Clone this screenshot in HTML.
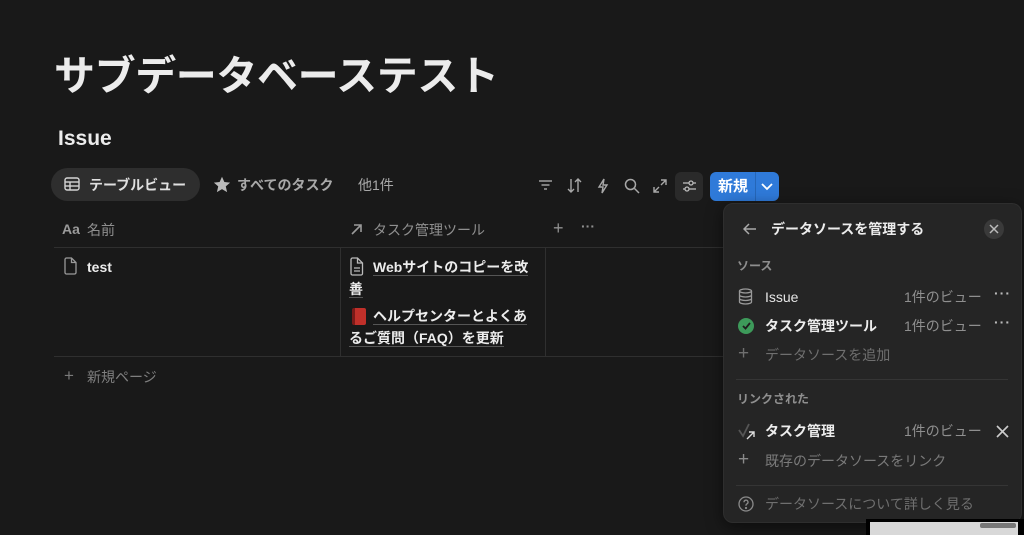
<!DOCTYPE html>
<html><head><meta charset="utf-8"><style>
*{margin:0;padding:0;box-sizing:border-box}
body{width:1024px;height:535px;background:#191919;color:#d4d4d4;font-family:"Liberation Sans","Noto Sans CJK JP",sans-serif;position:relative;overflow:hidden;font-size:14px}
.a{position:absolute;white-space:nowrap}
.t{color:#ececec;font-weight:700}
.g{color:#8f8f8f}
.ul{border-bottom:1px solid #555}
svg{position:absolute}
</style></head><body>
<div class="a t" style="left:54px;top:50px;font-size:41px;line-height:52px;letter-spacing:-0.4px">サブデータベーステスト</div>
<div class="a t" style="left:58px;top:125px;font-size:21px;line-height:28px">Issue</div>

<div class="a" style="left:51px;top:168px;width:149px;height:33px;border-radius:17px;background:#2e2e2e"></div>
<svg style="left:64px;top:177px" width="16" height="15" viewBox="0 0 16 15" fill="none" stroke="#d4d4d4" stroke-width="1.4"><rect x="1" y="1" width="14" height="12" rx="2"/><line x1="1" y1="5" x2="15" y2="5"/><line x1="1" y1="9" x2="15" y2="9"/><line x1="6" y1="5" x2="6" y2="13"/></svg>
<div class="a t" style="left:89px;top:176px;font-size:14px;line-height:18px;color:#e0e0e0">テーブルビュー</div>
<svg style="left:213px;top:176px" width="18" height="17" viewBox="0 0 24 23"><path d="M12 1l3.2 7.2 7.8.7-5.9 5.2 1.8 7.7L12 17.8 5.1 21.8l1.8-7.7L1 8.9l7.8-.7z" fill="#bbb"/></svg>
<div class="a" style="left:237px;top:176px;font-size:14px;line-height:18px;color:#a8a8a8;font-weight:700">すべてのタスク</div>
<div class="a" style="left:358px;top:176px;font-size:14px;line-height:18px;color:#a8a8a8">他1件</div>

<svg style="left:538px;top:179px" width="15" height="12" stroke="#a8a8a8" stroke-width="1.4"><line x1="1" y1="2" x2="14" y2="2"/><line x1="3.5" y1="6" x2="11.5" y2="6"/><line x1="6" y1="10" x2="9" y2="10"/></svg>
<svg style="left:567px;top:178px" width="15" height="15" fill="none" stroke="#a8a8a8" stroke-width="1.4"><path d="M4 1v13M1 11l3 3 3-3M11 14V1M8 4l3-3 3 3"/></svg>
<svg style="left:597px;top:178px" width="12" height="16" fill="none" stroke="#a8a8a8" stroke-width="1.4"><path d="M7 1L2 9h4l-1 6 5-8H6z"/></svg>
<svg style="left:624px;top:178px" width="16" height="16" fill="none" stroke="#a8a8a8" stroke-width="1.5"><circle cx="6.5" cy="6.5" r="5"/><line x1="10.5" y1="10.5" x2="15" y2="15"/></svg>
<svg style="left:653px;top:179px" width="14" height="14" fill="none" stroke="#a8a8a8" stroke-width="1.4"><path d="M8 1h5v5M13 1L8 6M6 13H1V8M1 13l5-5"/></svg>
<div class="a" style="left:675px;top:172px;width:28px;height:29px;border-radius:6px;background:#2a2a2a"></div>
<svg style="left:682px;top:179px" width="15" height="14" fill="none" stroke="#bbb" stroke-width="1.3"><line x1="1" y1="4" x2="14" y2="4"/><line x1="1" y1="10" x2="14" y2="10"/><circle cx="9" cy="4" r="2" fill="#2a2a2a"/><circle cx="5" cy="10" r="2" fill="#2a2a2a"/></svg>
<div class="a" style="left:710px;top:172px;width:69px;height:29px;border-radius:6px;background:#2f7ad9"></div>
<div class="a" style="left:755px;top:172px;width:1px;height:29px;background:#2566b8"></div>
<div class="a" style="left:718px;top:177px;font-size:15px;line-height:19px;color:#fff;font-weight:700">新規</div>
<svg style="left:761px;top:183px" width="12" height="8" fill="none" stroke="#fff" stroke-width="1.8"><path d="M1 1l5 5 5-5"/></svg>

<div class="a" style="left:62px;top:221px;font-size:14px;color:#9a9a9a;font-weight:700">Aa</div>
<div class="a g" style="left:87px;top:221px;font-size:14px;line-height:18px">名前</div>
<svg style="left:350px;top:223px" width="12" height="12" fill="none" stroke="#9a9a9a" stroke-width="1.6"><path d="M2 11L11 2M4 2h7v7"/></svg>
<div class="a g" style="left:373px;top:221px;font-size:14px;line-height:18px">タスク管理ツール</div>
<div class="a g" style="left:553px;top:218px;font-size:18px">+</div>
<div class="a g" style="left:581px;top:218px;font-size:14px;font-weight:700">···</div>
<div class="a" style="left:54px;top:247px;width:680px;height:1px;background:#2f2f2f"></div>
<div class="a" style="left:54px;top:356px;width:680px;height:1px;background:#2f2f2f"></div>
<div class="a" style="left:340px;top:247px;width:1px;height:109px;background:#2f2f2f"></div>
<div class="a" style="left:545px;top:247px;width:1px;height:109px;background:#2f2f2f"></div>
<svg style="left:64px;top:257px" width="13" height="18" fill="none" stroke="#9a9a9a" stroke-width="1.3"><path d="M1 2.5a1.5 1.5 0 0 1 1.5-1.5h5l4.5 4.5v10a1.5 1.5 0 0 1-1.5 1.5h-8A1.5 1.5 0 0 1 1 15.5z M7.5 1v4.5H12"/></svg>
<div class="a t" style="left:87px;top:258px;font-size:14px;line-height:18px">test</div>
<svg style="left:350px;top:257px" width="14" height="19" fill="none" stroke="#bbb" stroke-width="1.3"><path d="M1 2.5a1.5 1.5 0 0 1 1.5-1.5h5l5 5v10.5a1.5 1.5 0 0 1-1.5 1.5h-8.5A1.5 1.5 0 0 1 1 16.5z M7.5 1v5h5M4 11h6M4 14h6"/></svg>
<div class="a t" style="left:373px;top:258px;font-size:14px;line-height:18px"><span class="ul">Webサイトのコピーを改</span></div>
<div class="a t" style="left:349px;top:280px;font-size:14px;line-height:18px"><span class="ul">善</span></div>
<div class="a" style="left:352px;top:308px;width:14px;height:17px;background:#c0302a;border-radius:2px;border-left:3px solid #7a1a18"></div>
<div class="a t" style="left:373px;top:307px;font-size:14px;line-height:18px"><span class="ul">ヘルプセンターとよくあ</span></div>
<div class="a t" style="left:349px;top:329px;font-size:14px;line-height:18px"><span class="ul">るご質問（FAQ）を更新</span></div>
<div class="a" style="left:64px;top:366px;font-size:17px;color:#7a7a7a">+</div>
<div class="a" style="left:87px;top:368px;font-size:14px;line-height:18px;color:#7f7f7f">新規ページ</div>

<div class="a" style="left:723px;top:203px;width:299px;height:320px;border-radius:10px;background:#252525;box-shadow:0 4px 16px rgba(0,0,0,.5);border:1px solid #2e2e2e"></div>
<svg style="left:743px;top:223px" width="14" height="12" fill="none" stroke="#aaa" stroke-width="1.5"><path d="M13 6H1M6 1L1 6l5 5"/></svg>
<div class="a t" style="left:771px;top:220px;font-size:14px;line-height:19px">データソースを管理する</div>
<div class="a" style="left:984px;top:219px;width:20px;height:20px;border-radius:50%;background:#3a3a3a"></div>
<svg style="left:989px;top:224px" width="10" height="10" stroke="#bbb" stroke-width="1.5"><path d="M1 1l8 8M9 1L1 9"/></svg>
<div class="a g" style="left:737px;top:258px;font-size:12px;line-height:16px;font-weight:700">ソース</div>
<svg style="left:738px;top:288px" width="15" height="17" fill="none" stroke="#9a9a9a" stroke-width="1.3"><ellipse cx="7.5" cy="3" rx="6" ry="2"/><path d="M1.5 3v11c0 1.1 2.7 2 6 2s6-.9 6-2V3M1.5 7c0 1.1 2.7 2 6 2s6-.9 6-2M1.5 10.5c0 1.1 2.7 2 6 2s6-.9 6-2"/></svg>
<div class="a" style="left:765px;top:288px;font-size:14px;line-height:18px;color:#e5e5e5">Issue</div>
<div class="a g" style="left:904px;top:288px;font-size:14px;line-height:18px">1件のビュー</div>
<div class="a" style="left:994px;top:285px;font-size:14px;color:#bbb;font-weight:700;letter-spacing:1px">···</div>
<div class="a" style="left:738px;top:318px;width:16px;height:16px;border-radius:50%;background:#3d9a5a"></div>
<svg style="left:742px;top:322px" width="9" height="8" fill="none" stroke="#1e1e1e" stroke-width="1.8"><path d="M1 4l2.5 2.5L8 1"/></svg>
<div class="a t" style="left:765px;top:317px;font-size:14px;line-height:18px">タスク管理ツール</div>
<div class="a g" style="left:904px;top:317px;font-size:14px;line-height:18px">1件のビュー</div>
<div class="a" style="left:994px;top:314px;font-size:14px;color:#bbb;font-weight:700;letter-spacing:1px">···</div>
<div class="a" style="left:738px;top:343px;font-size:19px;color:#6f6f6f">+</div>
<div class="a" style="left:765px;top:346px;font-size:14px;line-height:18px;color:#6f6f6f">データソースを追加</div>
<div class="a" style="left:736px;top:379px;width:272px;height:1px;background:#353535"></div>
<div class="a g" style="left:737px;top:391px;font-size:12px;line-height:16px;font-weight:700">リンクされた</div>
<svg style="left:738px;top:423px" width="18" height="18" fill="none" stroke-width="1.8"><path d="M1 7l4 6 6-12" stroke="#555"/><path d="M9 16l7-7M11 9h5v5" stroke="#ddd" stroke-width="1.4"/></svg>
<div class="a t" style="left:765px;top:422px;font-size:14px;line-height:18px">タスク管理</div>
<div class="a g" style="left:904px;top:422px;font-size:14px;line-height:18px">1件のビュー</div>
<svg style="left:996px;top:425px" width="13" height="13" stroke="#ccc" stroke-width="1.6"><path d="M1 1l11 11M12 1L1 12"/></svg>
<div class="a" style="left:738px;top:449px;font-size:19px;color:#8a8a8a">+</div>
<div class="a" style="left:765px;top:452px;font-size:14px;line-height:18px;color:#7a7a7a">既存のデータソースをリンク</div>
<div class="a" style="left:736px;top:485px;width:272px;height:1px;background:#353535"></div>
<svg style="left:738px;top:496px" width="16" height="16" fill="none" stroke="#8a8a8a" stroke-width="1.3"><circle cx="8" cy="8" r="7"/><path d="M6 6.2a2 2 0 1 1 2.8 1.8c-.6.3-.8.7-.8 1.3v.5"/><circle cx="8" cy="12" r=".5" fill="#8a8a8a"/></svg>
<div class="a" style="left:765px;top:495px;font-size:14px;line-height:18px;color:#6f6f6f">データソースについて詳しく見る</div>

<div class="a" style="left:866px;top:519px;width:158px;height:16px;background:#000"></div>
<div class="a" style="left:870px;top:522px;width:148px;height:13px;background:#d8d8d8"></div>
<div class="a" style="left:980px;top:523px;width:36px;height:5px;background:#777;border-radius:2px"></div>
</body></html>
